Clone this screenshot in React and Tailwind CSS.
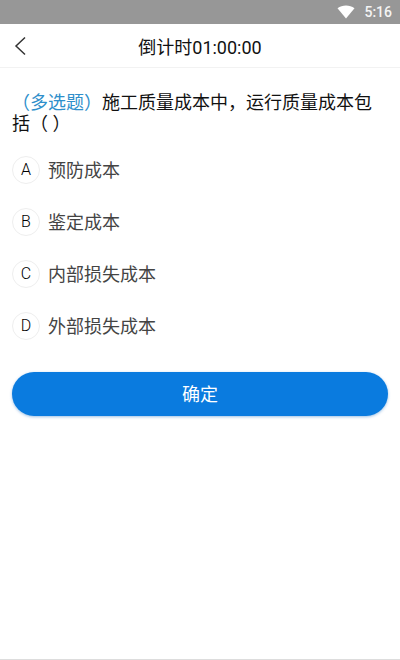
const options = [
  { key: 'A', label: '预防成本' },
  { key: 'B', label: '鉴定成本' },
  { key: 'C', label: '内部损失成本' },
  { key: 'D', label: '外部损失成本' },
];

const App = () => {
  return (
    <div className="flex flex-col h-[660px] w-[400px] bg-white overflow-hidden font-['Roboto','Noto_Sans_CJK_SC',sans-serif]">
      {/* Status bar */}
      <div className="flex items-center justify-end h-6 bg-[#979797] pr-2 gap-[9px]">
        <svg width="18" height="14" viewBox="0 0 18 14">
          <path d="M0.5 3.2C3 1.2 5.8 0.4 9 0.4s6 0.8 8.500 2.800L9 13.600z" fill="#fff" />
        </svg>
        <span className="text-[14px] font-medium leading-none text-[#f4f4f4]">5:16</span>
      </div>

      {/* Header */}
      <header className="relative flex items-center justify-center h-[44px] border-b border-[#f2f2f2]">
        <svg className="absolute left-[14px] top-[12px]" width="12" height="20" viewBox="0 0 12 20" fill="none">
          <path d="M11 1.500L2 10l9 8.500" stroke="#333" strokeWidth="1.500" />
        </svg>
        <h1 className="pt-1 text-[18px] font-normal text-[#111]">倒计时01:00:00</h1>
      </header>

      {/* Question */}
      <p className="px-3 pt-[24px] text-[18px] leading-[21px] text-[#111]">
        <span className="text-[#2f8fcb]">（多选题）</span>施工质量成本中，运行质量成本包括（ ）
      </p>

      {/* Options */}
      <ul className="flex flex-col gap-6 mt-[22px] px-3">
        {options.map(option => (
          <li key={option.key} className="flex items-center h-7">
            <span className="flex items-center justify-center w-7 h-7 rounded-full border border-[#eeeeee] text-[16px] font-light text-black">
              {option.key}
            </span>
            <span className="ml-2 text-[18px] text-[#444]">{option.label}</span>
          </li>
        ))}
      </ul>

      {/* Confirm */}
      <div className="px-3 mt-[32px]">
        <button className="w-full h-[44px] rounded-[22px] bg-[#0a7bdf] text-[18px] text-white shadow-[0_1px_3px_rgba(10,100,190,0.4)]">
          确定
        </button>
      </div>

      <div className="flex-1" />
      <div className="h-px bg-[#dddddd]" />
    </div>
  );
};

export default App;
